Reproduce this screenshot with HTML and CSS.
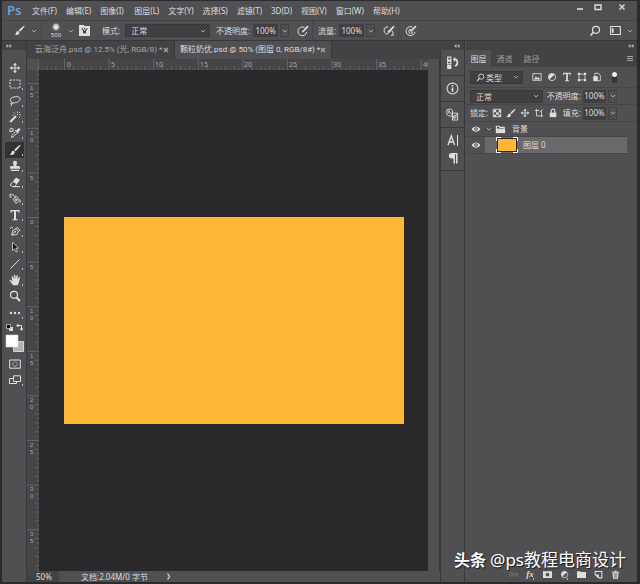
FILE: index.html
```html
<!DOCTYPE html>
<html lang="zh-CN">
<head>
<meta charset="utf-8">
<title>颗粒奶优.psd</title>
<link rel="stylesheet" href="styles.css">
</head>
<body>
<svg class="sprite" aria-hidden="true">
  <symbol id="chev" viewBox="0 0 6 6"><path class="ln" d="M1 2l2 2 2-2"/></symbol>
  <symbol id="close" viewBox="0 0 6 6"><path class="ln" stroke-width="1.400" d="M1 1l4 4M5 1L1 5"/></symbol>
  <symbol id="brush" viewBox="0 0 12 12"><path class="fl" d="M11.500.8c-.6-.5-4.800 3.200-6.300 5.200l1.300 1.300C8.600 5.600 12 1.300 11.500.8zM4.600 6.700c-1.500-.2-2 .8-2.200 1.800-.2 1.100-.9 1.700-1.900 1.700 1.800 1.500 5.200 1.100 5.400-2.200z"/></symbol>
  <symbol id="move" viewBox="0 0 12 12"><path class="fl" d="M6 .8l2 2.400H4zM6 11.200l2-2.400H4zM.8 6l2.400-2v4zM11.200 6L8.800 4v4z"/><path class="ln" d="M6 2v8M2 6h8"/></symbol>
  <symbol id="marquee" viewBox="0 0 12 12"><path class="ln" stroke-dasharray="2 1.200" d="M1 2h10v8H1z"/></symbol>
  <symbol id="lasso" viewBox="0 0 12 12"><path class="ln" d="M3 7.500C.5 6 1 3.300 4 2.200s6.500-.7 7 1.300-1.600 3.700-4.500 4.200c-1.700.3-3.500.5-4.200 0-.9.500-.6 1.700.4 1.500S4 8 3 7.500M2.500 9.300c.2.800-.2 1.500-.7 2"/></symbol>
  <symbol id="wand" viewBox="0 0 12 12"><path class="ln" stroke-width="2" d="M1.200 11L7 5"/><path class="ln" d="M8 4l1-1M8.500.6v1.200M5 1.500l1 1M11.500 3.500h-1.200M11 6.500l-1-.8M11 1l-.8.8M3.500 4l1 .3"/></symbol>
  <symbol id="dropper" viewBox="0 0 13 12"><path class="fl" d="M8.200 3.200c1.500-2.400 3-2.700 3.700-2s.3 2.200-1.900 3.700l.7.700-1 1-3.300-3.200 1-1z"/><path class="ln" d="M7.300 4.500L3.200 8.600l-.7 2.200 2.200-.7 4.100-4.200M1 1.500v3h3M1.300 1h3v2M3 3l2.500 1"/></symbol>
  <symbol id="stamp" viewBox="0 0 12 12"><path class="fl" d="M6 .7c1.300 0 2.200 1 2 2.200L7.200 6H10l1 1.200v1.500H1V7.200L2 6h2.800L4 2.900C3.800 1.700 4.700.7 6 .7zM1.800 9.800h8.400v1.300H1.800z"/></symbol>
  <symbol id="eraser" viewBox="0 0 12 12"><path class="fl" d="M7 1.500L11 4 7.700 8.300l-4-2.600z"/><path class="ln" d="M3.500 6L1.200 9l2.400 1.600h2L7.500 8.300M5 10.700h6"/></symbol>
  <symbol id="bucket" viewBox="0 0 13 12"><path class="ln" d="M1 4V1h3M1 4h2M4.500 1v2M4.500 6.200l3.700-3 3.300 4.300-4 3.200zM6.500 2v3"/><path class="fl" d="M11.300 6c1.500 1.400 1.700 3 .8 4.600-.7-1-.6-2.700-.8-4.600z"/><circle class="fl" cx="7.800" cy="6.800" r="1.300"/></symbol>
  <symbol id="type" viewBox="0 0 12 12"><path class="fl" d="M1.500 1h9v2.800h-.8C9.400 2.500 9 2.200 7 2.200v7.200c0 .7.400.9 1.500.9v.9h-5v-.9c1.100 0 1.500-.2 1.500-.9V2.200c-2 0-2.400.3-2.700 1.600h-.8z"/></symbol>
  <symbol id="pen" viewBox="0 0 13 12"><path class="ln" d="M3 10.500l1-5 3.500-2 2.700 3-1.500 3.300zM3 10.500l3-3.300M7.500 3.500L8.700 2 12 5.300l-1.700 1.200M1 3.500L3 1.700 4.500 3"/><circle class="fl" cx="6.700" cy="6.700" r="1"/></symbol>
  <symbol id="arrow" viewBox="0 0 12 12"><path fill="#171719" stroke="#d8d8da" stroke-width=".8" d="M3.500 1l6 6.200-2.600.1 1.500 3.200-1.400.6-1.500-3.200-2 1.700z"/></symbol>
  <symbol id="line" viewBox="0 0 12 12"><path class="ln" d="M1.500 10.500l9-9"/></symbol>
  <symbol id="hand" viewBox="0 0 12 12"><path class="fl" d="M4 11.200C3 9.500 1.500 8 .7 6.800c-.4-.8.700-1.300 1.400-.6l1.300 1.200L2.600 3c-.1-1 1-1.200 1.300-.3l.9 2.500L4.900 1.300c0-1 1.300-1 1.400 0l.3 3.800.9-3.500c.3-.9 1.400-.6 1.300.3l-.4 3.800 1.300-2.200c.6-.8 1.500-.3 1.200.6C10.400 5.500 10 9.500 8.700 11.200z"/></symbol>
  <symbol id="zoom" viewBox="0 0 12 12"><circle class="ln" cx="5" cy="4.800" r="3.500" stroke-width="1.200"/><path class="ln" stroke-width="1.900" d="M7.600 7.500l3.400 3.500"/></symbol>
  <symbol id="find" viewBox="0 0 12 12"><circle class="ln" cx="7" cy="4.800" r="3.500" stroke-width="1.200"/><path class="ln" stroke-width="1.600" d="M4.400 7.400L1.500 10.500"/></symbol>
  <symbol id="dots" viewBox="0 0 12 12"><circle class="fl" cx="2" cy="6" r="1.200"/><circle class="fl" cx="6" cy="6" r="1.200"/><circle class="fl" cx="10" cy="6" r="1.200"/></symbol>
  <symbol id="mask" viewBox="0 0 12 12"><path class="ln" d="M.7 2h10.600v8.200H.7z"/><circle class="ln" stroke-dasharray="1 .8" cx="6" cy="6.100" r="2.300"/></symbol>
  <symbol id="screen" viewBox="0 0 12 12"><path class="ln" d="M4.500 7.500V1.800h7v5.700zM4.500 4.500h-4v5h7v-2"/></symbol>
  <symbol id="folder" viewBox="0 0 12 12"><path class="fl" d="M0 1.500h4l1 1.300h7V10.500H0z"/></symbol>
  <symbol id="openfolder" viewBox="0 0 12 12"><path class="ln" stroke-width="1.200" d="M1.500 9.500v-7h3l1 1.200h4.500v1.500"/><path class="fl" d="M1 5h10v5H1z"/></symbol>
  <symbol id="pressure" viewBox="0 0 12 12"><path class="ln" d="M7.500 2.500A4.400 4.400 0 1 0 9.700 7"/><path class="ln" stroke-width="1.800" d="M5.500 7L11 1.200"/></symbol>
  <symbol id="target" viewBox="0 0 12 12"><path class="ln" d="M7.500 2A4.500 4.500 0 1 0 10 7M6.300 4.300a2.100 2.100 0 1 0 1.600 2.200"/><path class="ln" stroke-width="1.700" d="M5.500 6.500L11 1.200"/></symbol>
  <symbol id="air" viewBox="0 0 12 12"><path class="ln" d="M5 2C2 1.500.8 4 1.200 6.200S3.500 9.700 5 8.500l3-3M8 10.300h2V7L8.500 6"/><path class="ln" stroke-width="1.800" d="M5 7.300l6-6"/></symbol>
  <symbol id="eye" viewBox="0 0 12 12"><path class="fl" fill-rule="evenodd" d="M.7 6C3.300 1.800 8.700 1.800 11.300 6 8.700 10.200 3.300 10.200.7 6zM6 3.800a2.200 2.200 0 1 0 0 4.400 2.200 2.200 0 1 0 0-4.400z"/><circle class="fl" cx="6" cy="6" r="1"/></symbol>
  <symbol id="picture" viewBox="0 0 12 12"><path class="ln" d="M1 2h10v8H1z"/><path class="fl" d="M2.200 9l2.500-4 1.800 2.500L8 6l2 3z"/></symbol>
  <symbol id="adjust" viewBox="0 0 12 12"><circle class="ln" cx="6" cy="6" r="4.300"/><path class="fl" d="M2.900 9.100l6.200-6.200A4.400 4.400 0 0 0 2.900 9.100z"/></symbol>
  <symbol id="shape" viewBox="0 0 12 12"><path class="ln" d="M2.500 2.500h7v7h-7z"/><path class="fl" d="M1 1h2.600v2.600H1zM8.400 1H11v2.600H8.400zM1 8.400h2.600V11H1zM8.400 8.400H11V11H8.400z"/></symbol>
  <symbol id="smart" viewBox="0 0 12 12"><path class="ln" d="M3.500 5V1.500h4L10 4v6.500H7"/><path class="fl" d="M1.500 5H7v6H1.500z"/></symbol>
  <symbol id="checker" viewBox="0 0 12 12"><path class="ln" d="M1.500 1.500h9v9h-9z"/><path class="fl" d="M2 2h3v3H2zM8 2h2.500v3H8zM5 5h3v3H5zM2 8h3v2.500H2zM8 8h2.500v2.500H8z"/></symbol>
  <symbol id="crop" viewBox="0 0 12 12"><path class="ln" d="M3 1v8.500h8M1 3h5.500M9 4v7M7 5l3.500-3.500"/></symbol>
  <symbol id="lock" viewBox="0 0 12 12"><path class="fl" d="M2 5.500h8V11H2z"/><path class="ln" stroke-width="1.400" d="M3.800 6V3.600c0-3 4.400-3 4.400 0V6"/></symbol>
  <symbol id="preset" viewBox="0 0 12 12"><path class="fl" d="M0 0h5l1 1.200h6V12H0z"/><path stroke="#38373a" stroke-width="1.200" fill="none" d="M3 3.500L5.500 7M9 3.500L6.500 7"/><path fill="#38373a" d="M4.500 6.500h3V9h-3zM5.500 3h1v1.500h-1z"/></symbol>
  <symbol id="workspace" viewBox="0 0 12 10"><path class="ln" stroke-width="1.200" d="M.7.700h10.600v8.600H.7z"/><path class="fl" d="M2 2.500h2v5H2z"/></symbol>
  <symbol id="history" viewBox="0 0 12 12"><path class="ln" d="M1.500 1h3v2.700h-3zM1.500 4.700h3v2.600h-3z"/><path class="fl" d="M1 8.300h4V12H1zM6.300 3.300L8.500.8v4.700z"/><path class="ln" stroke-width="1.600" d="M8 3c3 0 3.500 4.500.5 6.500"/></symbol>
  <symbol id="info" viewBox="0 0 12 12"><circle class="ln" cx="6" cy="6" r="5"/><path class="ln" stroke-width="1.500" d="M6 5v4M6 2.800v1.300"/></symbol>
  <symbol id="clone" viewBox="0 0 14 14"><path class="ln" d="M1 2l4-1 2 2v6L3 8.500 1 7zM3 3l4 5M3 3v3M7 5.500h5.500V13H7zM12.500 6L7 12"/><circle class="ln" cx="9.500" cy="9.500" r="1.500"/></symbol>
  <symbol id="char" viewBox="0 0 12 12"><path class="ln" stroke-width="1.400" d="M1 11L4.300 2l3.300 9M2.200 8h4.300"/><path class="ln" d="M10.500 1v11"/></symbol>
  <symbol id="para" viewBox="0 0 12 12"><path class="fl" d="M5 1h5.500v10.500H9V2.200H8v9.300H6.500V6.500H5C.8 6.500.8 1 5 1z"/></symbol>
  <symbol id="link" viewBox="0 0 12 12"><path class="ln" d="M5 4H2.500a2 2 0 0 0 0 4H5M7 4h2.500a2 2 0 0 1 0 4H7M4 6h4"/></symbol>
  <symbol id="addmask" viewBox="0 0 12 12"><path class="fl" fill-rule="evenodd" d="M0 1.500h12v9H0zM6 3.500a2.500 2.500 0 1 0 0 5 2.500 2.500 0 1 0 0-5z"/></symbol>
  <symbol id="newlayer" viewBox="0 0 12 12"><path class="ln" stroke-width="1.400" d="M1.500 2h9v8.500H6.500L1.500 6z"/><path class="fl" d="M1.500 6h5v4.500z"/></symbol>
  <symbol id="trash" viewBox="0 0 12 12"><path class="fl" d="M1 2.200h3.500V1h3v1.200H11v1.300H1zM2 4.300h8L9.300 11.500H2.700z"/><path stroke="#504f52" stroke-width=".7" d="M4.500 5v5.500M6 5v5.500M7.500 5v5.500"/></symbol>
  <symbol id="left2" viewBox="0 0 6 4"><path class="fl" d="M2.500 0v4L0 2zM5.500 0v4L3 2z"/></symbol>
  <symbol id="right2" viewBox="0 0 6 4"><path class="fl" d="M.5 0v4L3 2zM3.500 0v4L6 2z"/></symbol>
</svg>

<div class="app">
  <header class="menubar">
    <span class="logo">Ps</span>
    <nav class="menus">
      <button>文件(F)</button><button>编辑(E)</button><button>图像(I)</button><button>图层(L)</button><button>文字(Y)</button><button>选择(S)</button><button>滤镜(T)</button><button>3D(D)</button><button>视图(V)</button><button>窗口(W)</button><button>帮助(H)</button>
    </nav>
    <div class="winctl">
      <button aria-label="最小化"><svg viewBox="0 0 8 8"><path class="ln" stroke-width="1.600" d="M1 6h6"/></svg></button>
      <button aria-label="最大化"><svg viewBox="0 0 8 8"><path class="ln" stroke-width="1.400" d="M1 2h6v4.500H1z"/></svg></button>
      <button aria-label="关闭"><svg viewBox="0 0 8 8"><path class="ln" stroke-width="1.400" d="M1.500 1.500l5 5M6.500 1.500l-5 5"/></svg></button>
    </div>
  </header>

  <section class="options">
    <div class="group tool-now">
      <button aria-label="画笔工具"><svg class="i11"><use href="#brush"/></svg></button>
      <button aria-label="工具预设"><svg class="i6"><use href="#chev"/></svg></button>
    </div>
    <div class="group tip">
      <button class="size" aria-label="画笔大小 500"><span class="dot"></span><span class="num">500</span></button>
      <button aria-label="画笔预设"><svg class="i6"><use href="#chev"/></svg></button>
      <button class="preset" aria-label="画笔面板"><svg class="i11"><use href="#preset"/></svg></button>
    </div>
    <div class="group mode">
      <label for="mode">模式:</label>
      <span class="pick wide"><select id="mode"><option>正常</option></select><svg class="i6"><use href="#chev"/></svg></span>
    </div>
    <div class="group amount">
      <label for="opacity">不透明度:</label>
      <span class="combo"><input id="opacity" value="100%"><button aria-label="调整不透明度"><svg class="i6"><use href="#chev"/></svg></button></span>
      <button class="press" aria-label="压力控制不透明度"><svg class="i12"><use href="#pressure"/></svg></button>
    </div>
    <div class="group flow">
      <label for="flow">流量:</label>
      <span class="combo"><input id="flow" value="100%"><button aria-label="调整流量"><svg class="i6"><use href="#chev"/></svg></button></span>
      <button class="press" aria-label="喷枪"><svg class="i12"><use href="#air"/></svg></button>
    </div>
    <div class="group last">
      <button aria-label="压力控制大小"><svg class="i12"><use href="#target"/></svg></button>
    </div>
    <div class="group views">
      <button aria-label="搜索"><svg class="i12"><use href="#find"/></svg></button>
      <button aria-label="工作区"><svg class="i11"><use href="#workspace"/></svg></button>
      <button aria-label="切换工作区"><svg class="i6"><use href="#chev"/></svg></button>
    </div>
  </section>

  <main class="work">
    <aside class="tools">
      <button class="collapse" aria-label="展开工具栏"><svg><use href="#right2"/></svg></button>
      <div class="toolbody">
        <div class="toollist">
          <button aria-label="移动"><svg><use href="#move"/></svg></button>
          <button class="more" aria-label="选框"><svg><use href="#marquee"/></svg></button>
          <button class="more" aria-label="套索"><svg><use href="#lasso"/></svg></button>
          <button class="more" aria-label="魔棒"><svg><use href="#wand"/></svg></button>
          <button class="more" aria-label="吸管"><svg><use href="#dropper"/></svg></button>
          <button class="more on" aria-label="画笔"><svg><use href="#brush"/></svg></button>
          <button class="more" aria-label="图章"><svg><use href="#stamp"/></svg></button>
          <button class="more" aria-label="橡皮擦"><svg><use href="#eraser"/></svg></button>
          <button class="more" aria-label="油漆桶"><svg><use href="#bucket"/></svg></button>
          <button class="more" aria-label="文字"><svg><use href="#type"/></svg></button>
          <button class="more" aria-label="钢笔"><svg><use href="#pen"/></svg></button>
          <button class="more" aria-label="路径选择"><svg><use href="#arrow"/></svg></button>
          <button class="more" aria-label="直线"><svg><use href="#line"/></svg></button>
          <button class="more" aria-label="抓手"><svg><use href="#hand"/></svg></button>
          <button aria-label="缩放"><svg><use href="#zoom"/></svg></button>
          <button class="more" aria-label="更多工具"><svg><use href="#dots"/></svg></button>
        </div>
        <svg class="swatches" viewBox="0 0 20 32" role="img" aria-label="前景色和背景色">
          <path fill="#ddd" d="M4 5h4v4H4z"/><path fill="#111" stroke="#ddd" stroke-width=".7" d="M1.500 2.500h4v4h-4z"/>
          <path class="ln" d="M13 3.500h3.500V8"/><path class="fl" d="M13.500 1.500v4l-2.500-2zM14.500 6.500h4l-2 2.500z"/>
          <path fill="#b0b0b2" stroke="#d4d4d6" d="M8.500 19.500h10v10h-10z"/><path fill="#fff" stroke="#dededf" stroke-width=".6" d="M1 13h12v12H1z"/>
        </svg>
        <button class="mode-btn" aria-label="快速蒙版"><svg><use href="#mask"/></svg></button>
        <button class="mode-btn more" aria-label="屏幕模式"><svg><use href="#screen"/></svg></button>
      </div>
    </aside>

    <section class="docs">
      <div class="doctabs">
        <div class="doctab"><span>云海泛舟.psd @ 12.5% (光, RGB/8) *</span><button aria-label="关闭云海泛舟"><svg class="i6"><use href="#close"/></svg></button></div>
        <div class="doctab active"><span>颗粒奶优.psd @ 50% (图层 0, RGB/8#) *</span><button aria-label="关闭颗粒奶优"><svg class="i6"><use href="#close"/></svg></button></div>
      </div>
      <div class="view">
        <div class="corner"></div>
        <svg class="hruler">
          <defs><pattern id="ht" x="25" width="44.600" height="11" patternUnits="userSpaceOnUse">
            <path class="tick" d="M.5 0v11M9.500 7v4M18.500 7v4M27.500 7v4M36.500 7v4M5 9v2M14 9v2M23 9v2M32 9v2M41 9v2"/></pattern></defs>
          <rect width="100%" height="11" fill="url(#ht)"/>
          <g class="marks"><text x="28" y="8">0</text><text x="72" y="8">5</text><text x="116" y="8">10</text><text x="161" y="8">15</text><text x="205" y="8">20</text><text x="250" y="8">25</text><text x="294" y="8">30</text><text x="339" y="8">35</text><text x="384" y="8">40</text></g>
        </svg>
        <div class="vtop"></div>
        <svg class="vruler">
          <defs><pattern id="vt" y="147" width="12" height="44.600" patternUnits="userSpaceOnUse">
            <path class="tick" d="M0 .5h12M8 9.500h4M8 18.500h4M8 27.500h4M8 36.500h4M10 5h2M10 14h2M10 23h2M10 32h2M10 41h2"/></pattern></defs>
          <rect width="12" height="100%" fill="url(#vt)"/>
          <g class="marks stacked">
            <text x="3" y="20">1</text><text x="3" y="27">5</text>
            <text x="3" y="65">1</text><text x="3" y="72">0</text>
            <text x="3" y="110">5</text><text x="3" y="154">0</text><text x="3" y="199">5</text>
            <text x="3" y="243">1</text><text x="3" y="250">0</text>
            <text x="3" y="288">1</text><text x="3" y="295">5</text>
            <text x="3" y="332">2</text><text x="3" y="339">0</text>
            <text x="3" y="377">2</text><text x="3" y="384">5</text>
            <text x="3" y="421">3</text><text x="3" y="428">0</text>
            <text x="3" y="466">3</text><text x="3" y="473">5</text>
          </g>
        </svg>
        <div class="canvas"><div class="artboard"></div></div>
        <div class="vscroll"></div>
      </div>
      <footer class="status"><span class="pct">50%</span><span class="docinfo">文档:2.04M/0 字节</span><button aria-label="状态选项">❯</button></footer>
    </section>

    <aside class="dock">
      <button class="collapse" aria-label="展开面板"><svg><use href="#left2"/></svg></button>
      <div class="cell"><button aria-label="历史记录"><svg><use href="#history"/></svg></button></div>
      <div class="cell"><button aria-label="信息"><svg><use href="#info"/></svg></button></div>
      <div class="cell"><button aria-label="仿制源"><svg><use href="#clone"/></svg></button></div>
      <div class="cell tall"><button aria-label="字符"><svg><use href="#char"/></svg></button><button aria-label="段落"><svg><use href="#para"/></svg></button></div>
      <div class="cell rest"></div>
    </aside>

    <aside class="panel">
      <button class="collapse" aria-label="折叠面板"><svg><use href="#left2"/></svg></button>
      <div class="ptabs"><button class="active">图层</button><button>通道</button><button>路径</button>
        <button class="pmenu" aria-label="面板菜单"><svg viewBox="0 0 6 6"><path class="ln" d="M0 .5h6M0 2.500h6M0 4.500h6"/></svg></button></div>
      <div class="prow filter">
        <span class="pick kind"><svg class="i9"><use href="#find"/></svg><select aria-label="筛选类型"><option>类型</option></select><svg class="i6"><use href="#chev"/></svg></span>
        <div class="icons">
          <button aria-label="像素"><svg><use href="#picture"/></svg></button><button aria-label="调整"><svg><use href="#adjust"/></svg></button><button aria-label="文字图层"><svg><use href="#type"/></svg></button><button aria-label="形状"><svg><use href="#shape"/></svg></button><button aria-label="智能对象"><svg><use href="#smart"/></svg></button>
        </div>
        <button class="toggle" aria-label="筛选开关"></button>
      </div>
      <div class="prow">
        <span class="pick blend"><select aria-label="混合模式"><option>正常</option></select><svg class="i6"><use href="#chev"/></svg></span>
        <label class="end" for="lop">不透明度:</label>
        <span class="combo"><input id="lop" value="100%"><button aria-label="调整图层不透明度"><svg class="i6"><use href="#chev"/></svg></button></span>
      </div>
      <div class="prow">
        <span class="locklabel">锁定:</span>
        <div class="icons locks">
          <button aria-label="锁定透明像素"><svg><use href="#checker"/></svg></button><button aria-label="锁定图像"><svg><use href="#brush"/></svg></button><button aria-label="锁定位置"><svg><use href="#move"/></svg></button><button aria-label="锁定画板"><svg><use href="#crop"/></svg></button><button aria-label="锁定全部"><svg><use href="#lock"/></svg></button>
        </div>
        <label class="end" for="fill">填充:</label>
        <span class="combo"><input id="fill" value="100%"><button aria-label="调整填充"><svg class="i6"><use href="#chev"/></svg></button></span>
      </div>
      <div class="layers">
        <div class="layer group-row"><button class="vis" aria-label="显示背景"><svg><use href="#eye"/></svg></button>
          <div class="body"><svg class="i6"><use href="#chev"/></svg><svg class="i11"><use href="#openfolder"/></svg><span class="name">背景</span></div></div>
        <div class="layer selected"><button class="vis" aria-label="显示图层 0"><svg><use href="#eye"/></svg></button>
          <div class="body"><svg class="thumb" viewBox="0 0 22 16"><path fill="#29282b" d="M1 1h20v14H1z"/><path fill="#ffb536" d="M2 2h18v12H2z"/><path fill="none" stroke="#fff" d="M.5 4V.5H5M17 .5h4.500V4M21.500 12v3.500H17M5 15.500H.5V12"/></svg><span class="name">图层 0</span></div></div>
      </div>
      <footer class="pfoot">
        <button class="dim" aria-label="链接图层"><svg><use href="#link"/></svg></button><button class="fx more" aria-label="图层样式">fx</button><button aria-label="添加蒙版"><svg><use href="#addmask"/></svg></button><button class="more" aria-label="调整图层"><svg><use href="#adjust"/></svg></button><button aria-label="新建组"><svg><use href="#folder"/></svg></button><button aria-label="新建图层"><svg><use href="#newlayer"/></svg></button><button aria-label="删除图层"><svg><use href="#trash"/></svg></button>
      </footer>
    </aside>
  </main>
  <div class="credit"><b>头条</b><span>@ps教程电商设计</span></div>
</div>
</body>
</html>
```
FILE: styles.css
```css
:root {
  --bg: #504f52;
  --bar: #434245;
  --edge: #38373a;
  --field: #403f42;
  --canvas: #29282b;
  --text: #dcdcde;
  --icon: #dededf;
}
* { box-sizing: border-box; }
body {
  margin: 0;
  background: #2b2a2d;
  color: var(--text);
  font: 8px/12px "Noto Sans", "Noto Sans CJK SC", sans-serif;
}
button, input, select {
  margin: 0;
  padding: 0;
  border: 0;
  background: none;
  color: inherit;
  font: inherit;
  border-radius: 0;
}
button { display: flex; align-items: center; justify-content: center; }
svg { display: block; flex: none; color: var(--icon); }
.sprite { position: absolute; width: 0; height: 0; }
.ln { fill: none; stroke: currentColor; }
.fl { fill: currentColor; }
.i6 { width: 6px; height: 6px; color: #a5a5a7; }
.i9 { width: 9px; height: 9px; }
.i11 { width: 11px; height: 11px; }
.i12 { width: 12px; height: 12px; }

.app {
  position: relative;
  display: flex;
  flex-direction: column;
  min-height: 100vh;
  padding: 1px 3px 2px 2px;
  white-space: nowrap;
}

/* Menu bar */
.menubar { display: flex; height: 19px; background: var(--bg); }
.logo {
  width: 30px;
  padding-left: 5px;
  color: #73a5d6;
  font: 600 13px/18px "Open Sans", "Noto Sans", sans-serif;
}
.menus { display: flex; }
.menus button { min-width: 34px; padding-right: 9px; justify-content: flex-start; }
.menus button:nth-child(8) { min-width: 0; }
.winctl { display: flex; margin-left: auto; height: 12px; }
.winctl button { width: 18px; }
.winctl button:last-child { width: 30px; }
.winctl svg { width: 8px; height: 8px; }

/* Options bar */
.options {
  display: flex;
  height: 21px;
  background: var(--bg);
  border-top: 1px solid #444346;
  border-bottom: 1px solid var(--edge);
}
.group { display: flex; align-items: center; }
.tool-now { width: 40px; padding-left: 12px; gap: 6px; border-right: 1px solid #444346; }
.tip { width: 60px; padding-left: 7px; gap: 5px; }
.size { flex-direction: column; width: 14px; }
.dot { width: 8px; height: 8px; border-radius: 50%; background: radial-gradient(#fff, #c5c5c7 40%, #504f52 75%); }
.num { font-size: 6px; line-height: 8px; }
.mode { gap: 5px; width: 114px; }
.amount { width: 97px; gap: 3px; border-right: 1px solid #444346; }
.flow { width: 86px; padding-left: 5px; gap: 3px; border-right: 1px solid #444346; }
.press { margin-left: 5px; }
.last { padding-left: 6px; }
.views { margin-left: auto; gap: 9px; padding-right: 4px; }
.views button:last-child { margin-left: -3px; }

.pick {
  display: flex;
  align-items: center;
  height: 13px;
  padding: 0 3px 0 5px;
  background: var(--field);
  border: 1px solid #39383b;
}
.pick select { appearance: none; flex: 1; min-width: 0; outline: 0; line-height: 11px; }
.wide { width: 85px; }
.combo { display: flex; gap: 2px; height: 13px; }
.combo input { width: 25px; background: var(--field); text-align: center; }
.combo button { width: 9px; border: 1px solid #424144; }

/* Workspace */
.work { display: flex; flex: 1; background: var(--bar); }
.collapse { width: 100%; height: 9px; flex: none; }
.collapse svg { width: 6px; height: 4px; color: #b5b5b7; }

.tools { display: flex; flex-direction: column; width: 25px; border-right: 1px solid var(--edge); }
.tools .collapse { justify-content: flex-start; padding-left: 4px; }
.toolbody { flex: 1; padding: 10px 2px 0 3px; background: var(--bg); }
.toollist { display: grid; grid-auto-rows: 1fr; height: 261px; }
.toollist button, .mode-btn { width: 19px; height: 16px; }
.toollist svg { width: 12px; height: 12px; }
.toollist .on { background: #323134; }
.more { position: relative; }
.more::after { content: ""; position: absolute; right: 1px; bottom: 2px; width: 1px; height: 2px; background: #b5b5b7; }
.swatches { width: 20px; height: 32px; margin: 1px 0 2px; }
.mode-btn svg { width: 12px; height: 12px; }

.docs { display: flex; flex: 1; flex-direction: column; min-width: 0; }
.doctabs { display: flex; height: 18px; padding-left: 1px; font-family: Roboto, "Noto Sans CJK SC", sans-serif; }
.doctab { display: flex; align-items: center; justify-content: space-between; width: 147px; padding: 0 6px 0 7px; color: #a7a7a9; border-right: 1px solid var(--edge); }
.doctab.active { width: 157px; padding-left: 5px; background: var(--bg); color: var(--text); }
.view { display: grid; flex: 1; grid-template-columns: 12px 1fr 12px; grid-template-rows: 11px 1fr; background: var(--bg); }
.corner { background: var(--bg); border-right: 1px solid #626164; }
.hruler { width: 100%; height: 11px; background: #464548; }
.vruler { width: 12px; height: 100%; background: #464548; }
.tick { stroke: #646366; fill: none; }
.marks { fill: #a6a5a8; font-size: 7px; }
.stacked { font: 6px "Liberation Sans", sans-serif; }
.canvas { display: grid; place-items: center; background: var(--canvas); }
.artboard { width: 340px; height: 207px; background: #ffb536; }
.vtop, .vscroll { border-right: 1px solid var(--edge); }
.status { display: flex; height: 11px; align-items: center; background: var(--bg); line-height: 11px; }
.pct { width: 32px; padding-left: 9px; background: var(--bar); }
.docinfo { width: 107px; padding-left: 22px; }
.status button { font-size: 6px; }

.dock { display: flex; flex-direction: column; width: 25px; border-right: 1px solid var(--edge); }
.dock .collapse { justify-content: flex-end; padding-right: 4px; }
.cell { display: flex; flex-direction: column; align-items: center; justify-content: center; height: 26px; background: var(--bg); border: solid var(--edge); border-width: 0 0 1px 1px; }
.cell svg { width: 13px; height: 13px; }
.cell.tall { height: 43px; gap: 6px; }
.cell.tall svg { width: 12px; height: 12px; }
.cell.rest { flex: 1; border-bottom: 0; }

/* Layers panel */
.panel { display: flex; flex-direction: column; width: 172px; padding-left: 1px; background: var(--bg); }
.panel > .collapse { justify-content: flex-end; padding-right: 3px; background: var(--bar); }
.ptabs { display: flex; height: 17px; background: var(--bar); }
.ptabs button { width: 27px; color: #98979a; }
.ptabs .active { width: 25px; background: var(--bg); color: var(--text); }
.ptabs .pmenu { width: 14px; margin-left: auto; }
.pmenu svg { width: 6px; height: 6px; color: #a5a5a7; }
.prow { display: flex; align-items: center; height: 17px; padding: 0 20px 0 4px; border-bottom: 1px solid #464548; }
.prow .combo input { width: 23px; }
.filter { height: 21px; }
.kind { width: 53px; gap: 1px; }
.blend { width: 73px; }
.icons { display: flex; gap: 5px; margin-left: 9px; }
.icons svg { width: 10px; height: 10px; }
.locks { gap: 4px; margin-left: 4px; }
.toggle { width: 5px; height: 11px; margin-left: auto; background: #343336; border-radius: 3px; }
.toggle::before { content: ""; width: 5px; height: 5px; border-radius: 50%; background: #f1f1f1; margin-bottom: 6px; }
.end { margin: 0 2px 0 auto; }
.layers { flex: 1; padding-right: 10px; }
.layer { display: flex; height: 17px; border-bottom: 1px solid #464548; }
.group-row { height: 15px; }
.vis { width: 19px; }
.vis svg { width: 10px; height: 10px; }
.body { display: flex; flex: 1; align-items: center; }
.group-row .body { gap: 3px; padding-left: 1px; }
.group-row .name { margin-left: 3px; }
.selected .body { gap: 5px; padding-left: 11px; background: #69686b; }
.thumb { width: 22px; height: 16px; }
.pfoot { display: flex; justify-content: flex-end; height: 16px; gap: 7px; padding-right: 17px; }
.pfoot button { width: 10px; }
.pfoot svg { width: 9px; height: 9px; }
.pfoot .dim { opacity: .35; }
.pfoot .fx { font: italic bold 9px/12px "Liberation Serif", serif; }

.credit {
  position: absolute;
  right: 14px;
  bottom: 13px;
  display: flex;
  gap: 4px;
  color: #fff;
  font-size: 17px;
  line-height: 22px;
  text-shadow: 1px 1px 1px #19181b;
}
.credit b { font-size: 16px; }
```
